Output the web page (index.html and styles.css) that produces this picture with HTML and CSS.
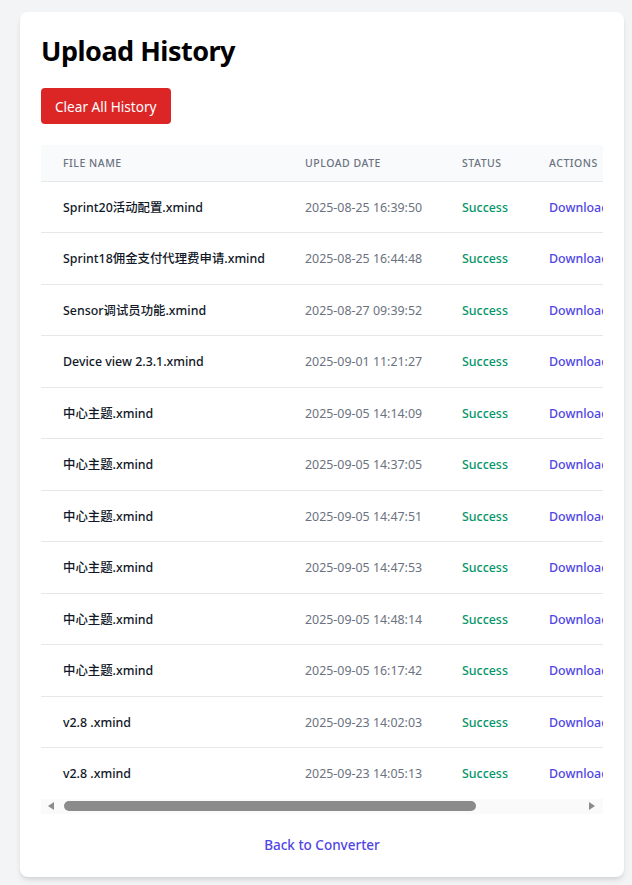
FILE: index.html
```html
<!DOCTYPE html>
<html>
  <head>
    <meta charset="utf-8">
    <title>Upload History</title>
    <link rel="stylesheet" href="styles.css">
  </head>
  <body>
    <div class="page">
      <div class="card">
        <h1 class="title">Upload History</h1>
        <button class="btn-clear">Clear All History</button>
        <div class="table-wrap">
          <table class="history">
            <colgroup>
              <col class="c-name">
              <col class="c-date">
              <col class="c-status">
              <col class="c-actions">
            </colgroup>
            <thead>
              <tr>
                <th>File Name</th>
                <th>Upload Date</th>
                <th>Status</th>
                <th>Actions</th>
              </tr>
            </thead>
            <tbody>
              <tr>
                <td class="name">Sprint20活动配置.xmind</td>
                <td class="date">2025-08-25 16:39:50</td>
                <td class="status">Success</td>
                <td class="actions"><a href="#">Download</a><a href="#" class="del">Delete</a></td>
              </tr>
              <tr>
                <td class="name">Sprint18佣金支付代理费申请.xmind</td>
                <td class="date">2025-08-25 16:44:48</td>
                <td class="status">Success</td>
                <td class="actions"><a href="#">Download</a><a href="#" class="del">Delete</a></td>
              </tr>
              <tr>
                <td class="name">Sensor调试员功能.xmind</td>
                <td class="date">2025-08-27 09:39:52</td>
                <td class="status">Success</td>
                <td class="actions"><a href="#">Download</a><a href="#" class="del">Delete</a></td>
              </tr>
              <tr>
                <td class="name">Device view 2.3.1.xmind</td>
                <td class="date">2025-09-01 11:21:27</td>
                <td class="status">Success</td>
                <td class="actions"><a href="#">Download</a><a href="#" class="del">Delete</a></td>
              </tr>
              <tr>
                <td class="name">中心主题.xmind</td>
                <td class="date">2025-09-05 14:14:09</td>
                <td class="status">Success</td>
                <td class="actions"><a href="#">Download</a><a href="#" class="del">Delete</a></td>
              </tr>
              <tr>
                <td class="name">中心主题.xmind</td>
                <td class="date">2025-09-05 14:37:05</td>
                <td class="status">Success</td>
                <td class="actions"><a href="#">Download</a><a href="#" class="del">Delete</a></td>
              </tr>
              <tr>
                <td class="name">中心主题.xmind</td>
                <td class="date">2025-09-05 14:47:51</td>
                <td class="status">Success</td>
                <td class="actions"><a href="#">Download</a><a href="#" class="del">Delete</a></td>
              </tr>
              <tr>
                <td class="name">中心主题.xmind</td>
                <td class="date">2025-09-05 14:47:53</td>
                <td class="status">Success</td>
                <td class="actions"><a href="#">Download</a><a href="#" class="del">Delete</a></td>
              </tr>
              <tr>
                <td class="name">中心主题.xmind</td>
                <td class="date">2025-09-05 14:48:14</td>
                <td class="status">Success</td>
                <td class="actions"><a href="#">Download</a><a href="#" class="del">Delete</a></td>
              </tr>
              <tr>
                <td class="name">中心主题.xmind</td>
                <td class="date">2025-09-05 16:17:42</td>
                <td class="status">Success</td>
                <td class="actions"><a href="#">Download</a><a href="#" class="del">Delete</a></td>
              </tr>
              <tr>
                <td class="name">v2.8 .xmind</td>
                <td class="date">2025-09-23 14:02:03</td>
                <td class="status">Success</td>
                <td class="actions"><a href="#">Download</a><a href="#" class="del">Delete</a></td>
              </tr>
              <tr>
                <td class="name">v2.8 .xmind</td>
                <td class="date">2025-09-23 14:05:13</td>
                <td class="status">Success</td>
                <td class="actions"><a href="#">Download</a><a href="#" class="del">Delete</a></td>
              </tr>
            </tbody>
          </table>
        </div>
        <div class="hscroll">
          <span class="arrow arrow-left"></span>
          <span class="thumb"></span>
          <span class="arrow arrow-right"></span>
        </div>
        <div class="back">
          <a href="#">Back to Converter</a>
        </div>
      </div>
    </div>
  </body>
</html>
```

FILE: styles.css
```css
* {
    box-sizing: border-box;
}

body {
    margin: 0;
    background-color: #f3f4f6;
    font-family: "Noto Sans", "Noto Sans CJK SC", sans-serif;
    color: #111827;
}

.page {
    padding: 12px 8px 8px 20px;
}

.card {
    background: #fff;
    border-radius: 8px;
    box-shadow: 0 4px 6px -1px rgba(0, 0, 0, 0.1), 0 2px 4px -2px rgba(0, 0, 0, 0.1);
    padding: 21px 21px 22px 21px;
}

.title {
    margin: 0 0 19px 0;
    font-size: 27px;
    line-height: 36px;
    font-weight: 700;
    letter-spacing: -0.5px;
    color: #000;
}

.btn-clear {
    display: block;
    height: 36px;
    padding: 0 14px;
    border: none;
    border-radius: 4px;
    background-color: #dc2626;
    color: #fff;
    font-family: inherit;
    font-size: 13.6px;
}

.table-wrap {
    margin-top: 21px;
    overflow: hidden;
}

/* drawn horizontal scrollbar of the table */
.hscroll {
    display: flex;
    align-items: center;
    height: 15px;
    padding: 0 8px 0 7px;
    background: #fafafa;
}
.arrow {
    width: 0;
    height: 0;
    border-top: 4px solid transparent;
    border-bottom: 4px solid transparent;
}
.arrow-left {
    border-right: 6px solid #8b8b8b;
}
.arrow-right {
    margin-left: auto;
    border-left: 6px solid #8b8b8b;
}
.thumb {
    width: 412px;
    height: 10px;
    margin-left: 10px;
    border-radius: 5px;
    background: #8b8b8b;
}

.history {
    width: 724px;
    table-layout: fixed;
    border-collapse: collapse;
}
.c-name { width: 242px; }
.c-date { width: 157px; }
.c-status { width: 87px; }
.c-actions { width: 238px; }

.history th {
    height: 36px;
    padding: 0 0 0 22px;
    background-color: #f9fafb;
    border-bottom: 1px solid #e5e7eb;
    text-align: left;
    font-size: 10.5px;
    font-weight: 500;
    letter-spacing: 0.05em;
    text-transform: uppercase;
    color: #6b7280;
    white-space: nowrap;
}

.history td {
    padding: 17px 0 15px 22px;
    font-size: 12.4px;
    line-height: 18.5px;
    border-bottom: 1px solid #e5e7eb;
    white-space: nowrap;
    overflow: hidden;
}
.history tbody tr:last-child td {
    border-bottom: none;
}

.name {
    font-weight: 500;
    color: #111827;
}
.date {
    color: #6b7280;
}
.status {
    font-weight: 500;
    color: #059669;
}
.actions a {
    color: #4f46e5;
    text-decoration: none;
    font-weight: 500;
}
.actions .del {
    margin-left: 16px;
    color: #dc2626;
}

.back {
    margin-top: 20px;
    text-align: center;
    line-height: 20px;
}
.back a {
    color: #4f46e5;
    text-decoration: none;
    font-size: 13.5px;
    font-weight: 500;
}
```
